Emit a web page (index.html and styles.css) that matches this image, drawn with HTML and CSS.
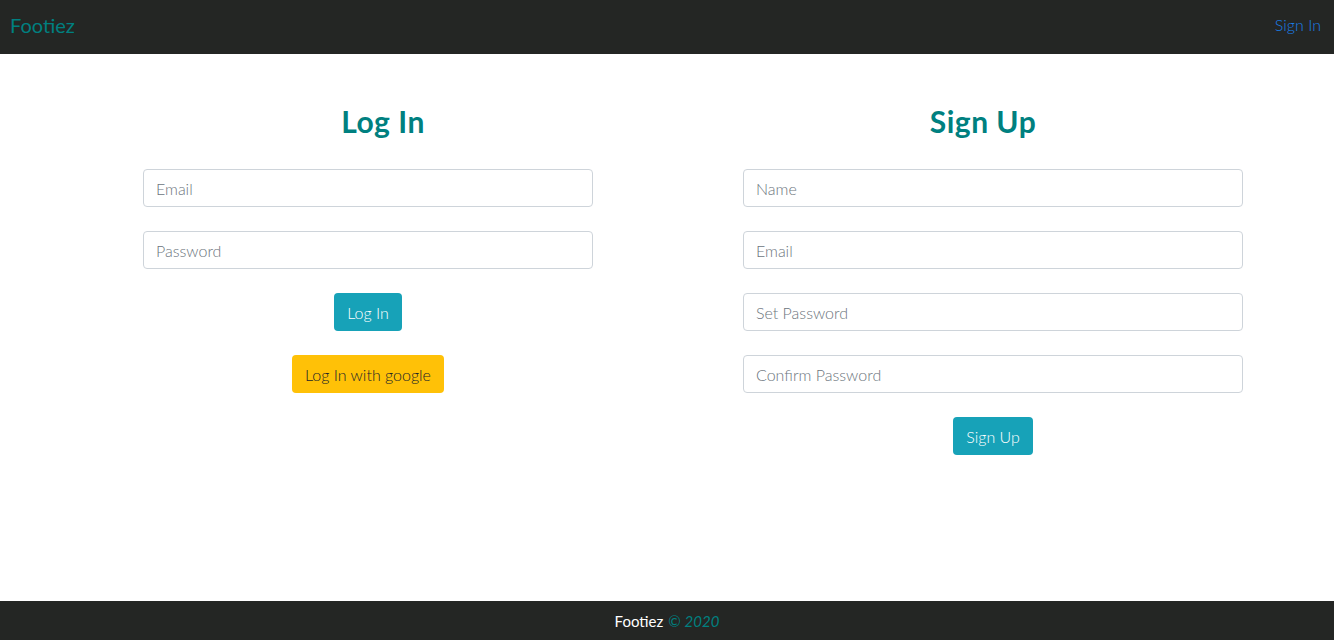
FILE: index.html
```html
<!DOCTYPE html>
<html>
<head>
<meta charset="utf-8">
<link rel="stylesheet" href="styles.css">
</head>
<body>
<nav class="navbar">
  <a class="brand" href="#">Footiez</a>
  <a class="nav-link" href="#">Sign In</a>
</nav>
<main class="main">
  <section class="col col-left">
    <h1 class="title">Log In</h1>
    <form class="form form-left">
      <input class="field" type="text" placeholder="Email">
      <input class="field" type="password" placeholder="Password">
      <button class="btn btn-info" type="button">Log In</button>
      <button class="btn btn-warning" type="button">Log In with google</button>
    </form>
  </section>
  <section class="col col-right">
    <h1 class="title">Sign Up</h1>
    <form class="form form-right">
      <input class="field" type="text" placeholder="Name">
      <input class="field" type="text" placeholder="Email">
      <input class="field" type="password" placeholder="Set Password">
      <input class="field" type="password" placeholder="Confirm Password">
      <button class="btn btn-info" type="button">Sign Up</button>
    </form>
  </section>
</main>
<footer class="footer">
  <span>Footiez</span> <span class="copy">© <em>2020</em></span>
</footer>
</body>
</html>
```
FILE: styles.css
```css
* { box-sizing: border-box; }
html, body { margin: 0; padding: 0; }
body {
  font-family: "Lato", "Open Sans", sans-serif;
  font-weight: 300;
  background: #fff;
  height: 640px;
  display: flex;
  flex-direction: column;
}
.navbar {
  height: 54px;
  background: #242624;
  display: flex;
  align-items: center;
  justify-content: space-between;
  padding: 0 13px 5px 10px;
  flex: none;
}
.brand {
  color: #008080;
  font-size: 20px;
  text-decoration: none;
  font-weight: 400;
}
.nav-link {
  color: #1a7fe8;
  font-size: 16px;
  text-decoration: none;
}
.main {
  flex: 1;
  display: flex;
  padding-left: 143px;
  gap: 120px;
}
.col {
  width: 480px;
  display: flex;
  flex-direction: column;
}
.title {
  margin: 50px 0 0;
  text-align: center;
  color: #008080;
  font-size: 30px;
  letter-spacing: 0.5px;
  font-weight: 700;
  line-height: 34px;
}
.form {
  margin-top: 31px;
  display: flex;
  flex-direction: column;
  align-items: center;
  gap: 24px;
}
.form-left { width: 450px; }
.form-right { width: 500px; }
.field {
  width: 100%;
  height: 38px;
  border: 1px solid #ced4da;
  border-radius: 4px;
  padding: 0 12px;
  font-family: inherit;
  font-weight: 300;
  font-size: 16px;
  color: #495057;
}
.field::placeholder { color: #6c757d; }
.btn {
  height: 38px;
  border: none;
  border-radius: 4px;
  padding: 0 13.5px;
  font-family: inherit;
  font-weight: 300;
  font-size: 16px;
}
.btn-info { background: #17a2b8; color: #fff; }
.btn-warning { background: #ffc107; color: #212529; }
.footer {
  height: 39px;
  flex: none;
  background: #242624;
  color: #fff;
  display: flex;
  align-items: center;
  justify-content: center;
  gap: 5px;
  font-size: 15px;
  font-weight: 400;
}
.copy { color: #008080; }
```
